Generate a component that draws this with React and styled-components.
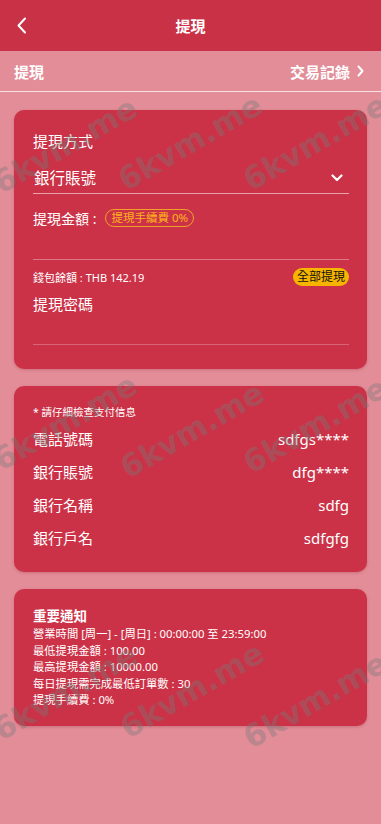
import React from "react";
import styled, { createGlobalStyle } from "styled-components";

const GlobalStyle = createGlobalStyle`
  html, body {
    margin: 0;
    padding: 0;
    background: #e38d98;
    font-family: "Noto Sans", "Noto Sans CJK TC", sans-serif;
    color: #fff;
  }
  * { box-sizing: border-box; }
`;

const Page = styled.div`
  position: relative;
  min-height: 824px;
  background: #e38d98;
  overflow: hidden;
`;

const Header = styled.div`
  height: 51px;
  background: #c93246;
  display: flex;
  align-items: center;
  justify-content: center;
  position: relative;
`;

const BackBtn = styled.div`
  position: absolute;
  left: 16px;
  top: 17px;
  width: 12px;
  height: 17px;
  display: flex;
`;

const HeaderTitle = styled.div`
  font-size: 15px;
  font-weight: 700;
  line-height: 20px;
`;

const SubBar = styled.div`
  height: 41px;
  padding: 0 17px 0 14px;
  display: flex;
  align-items: center;
  justify-content: space-between;
  border-bottom: 1px solid rgba(255, 255, 255, 0.75);
  font-size: 15px;
  font-weight: 700;
`;

const RecordLink = styled.div`
  display: flex;
  align-items: center;
  gap: 7px;
`;

const Content = styled.div`
  padding: 18px 14px 0;
  display: flex;
  flex-direction: column;
  gap: 17px;
`;

const Card = styled.div`
  background: #cb3247;
  border-radius: 10px;
  box-shadow: 0 1px 3px rgba(120, 20, 40, 0.25);
  padding: ${(p) => p.pad};
`;

const Label = styled.div`
  font-size: 15px;
  line-height: 20px;
  margin-top: ${(p) => p.top || 0}px;
`;

const SelectRow = styled.div`
  margin-top: 13px;
  height: 30px;
  display: flex;
  align-items: center;
  justify-content: space-between;
  border-bottom: 1px solid rgba(255, 255, 255, 0.55);
  font-size: 15.5px;
  padding: 0 6px 2px 1px;
`;

const AmountRow = styled.div`
  margin-top: 15px;
  height: 18px;
  display: flex;
  align-items: center;
  gap: 9px;
  font-size: 14px;
`;

const FeeBadge = styled.span`
  border: 1px solid #f0a12a;
  color: #ffb31a;
  border-radius: 10px;
  font-size: 11.5px;
  line-height: 16px;
  padding: 0 5px;
`;

const InputLine = styled.div`
  height: ${(p) => p.h}px;
  border-bottom: 1px solid rgba(255, 255, 255, ${(p) => p.alpha || 0.3});
`;

const BalanceRow = styled.div`
  margin-top: 7px;
  height: 19px;
  display: flex;
  align-items: center;
  justify-content: space-between;
  font-size: 11px;
`;

const AllBtn = styled.span`
  background: #f7b500;
  color: #111;
  font-size: 12px;
  line-height: 18px;
  padding: 0 4px;
  border-radius: 9px;
`;

const Note = styled.div`
  font-size: 10.5px;
  line-height: 16px;
  margin-bottom: 2px;
`;

const InfoRow = styled.div`
  height: 33px;
  display: flex;
  align-items: center;
  justify-content: space-between;
  font-size: 15px;
`;

const NoticeTitle = styled.div`
  font-size: 13.5px;
  font-weight: 700;
  line-height: 20px;
`;

const NoticeLine = styled.div`
  font-size: 11.3px;
  line-height: 16.5px;
`;

const Watermarks = styled.div`
  position: absolute;
  inset: 0;
  pointer-events: none;
  z-index: 5;
`;

const Mark = styled.span`
  position: absolute;
  transform: translate(-50%, -50%) rotate(-30deg);
  font-family: "DejaVu Sans", sans-serif;
  font-weight: 700;
  font-size: 31px;
  color: rgba(120, 120, 120, 0.38);
  white-space: nowrap;
`;

const marks = [
  [65, 145], [190, 142], [315, 142],
  [65, 422], [192, 430], [315, 425],
  [65, 692], [192, 690], [315, 700],
];

const notice = [
  "營業時間 [周一] - [周日] : 00:00:00 至 23:59:00",
  "最低提現金額 : 100.00",
  "最高提現金額 : 10000.00",
  "每日提現需完成最低訂單數 : 30",
  "提現手續費 : 0%",
];

const info = [
  ["電話號碼", "sdfgs****"],
  ["銀行賬號", "dfg****"],
  ["銀行名稱", "sdfg"],
  ["銀行戶名", "sdfgfg"],
];

export default function App() {
  return (
    <Page>
      <GlobalStyle />
      <Header>
        <BackBtn>
          <svg width="12" height="17" viewBox="0 0 12 17">
            <polyline points="9,1.5 2.5,8.5 9,15.5" fill="none" stroke="#fff" strokeWidth="2" strokeLinecap="round" strokeLinejoin="round" />
          </svg>
        </BackBtn>
        <HeaderTitle>提現</HeaderTitle>
      </Header>
      <SubBar>
        <span>提現</span>
        <RecordLink>
          交易記錄
          <svg width="7" height="12" viewBox="0 0 7 12">
            <polyline points="1.5,1.5 5.5,6 1.5,10.5" fill="none" stroke="#fff" strokeWidth="2" strokeLinecap="round" strokeLinejoin="round" />
          </svg>
        </RecordLink>
      </SubBar>

      <Content>
        <Card pad="21px 18px 24px 19px">
          <Label>提現方式</Label>
          <SelectRow>
            <span>銀行賬號</span>
            <svg width="12" height="8" viewBox="0 0 12 8">
              <polyline points="1.5,1.5 6,6 10.5,1.5" fill="none" stroke="#fff" strokeWidth="2.2" strokeLinecap="round" strokeLinejoin="round" />
            </svg>
          </SelectRow>
          <AmountRow>
            <span>提現金額 :</span>
            <FeeBadge>提現手續費 0%</FeeBadge>
          </AmountRow>
          <InputLine h={33} alpha={0.35} />
          <BalanceRow>
            <span>錢包餘額 : THB 142.19</span>
            <AllBtn>全部提現</AllBtn>
          </BalanceRow>
          <Label top={8}>提現密碼</Label>
          <InputLine h={31} alpha={0.25} />
        </Card>

        <Card pad="18px 18px 18px 19px">
          <Note>* 請仔細檢查支付信息</Note>
          {info.map(([k, v]) => (
            <InfoRow key={k}>
              <span>{k}</span>
              <span>{v}</span>
            </InfoRow>
          ))}
        </Card>

        <Card pad="17px 18px 17px 19px">
          <NoticeTitle>重要通知</NoticeTitle>
          {notice.map((t) => (
            <NoticeLine key={t}>{t}</NoticeLine>
          ))}
        </Card>
      </Content>

      <Watermarks>
        {marks.map(([x, y], i) => (
          <Mark key={i} style={{ left: x, top: y }}>6kvm.me</Mark>
        ))}
      </Watermarks>
    </Page>
  );
}
